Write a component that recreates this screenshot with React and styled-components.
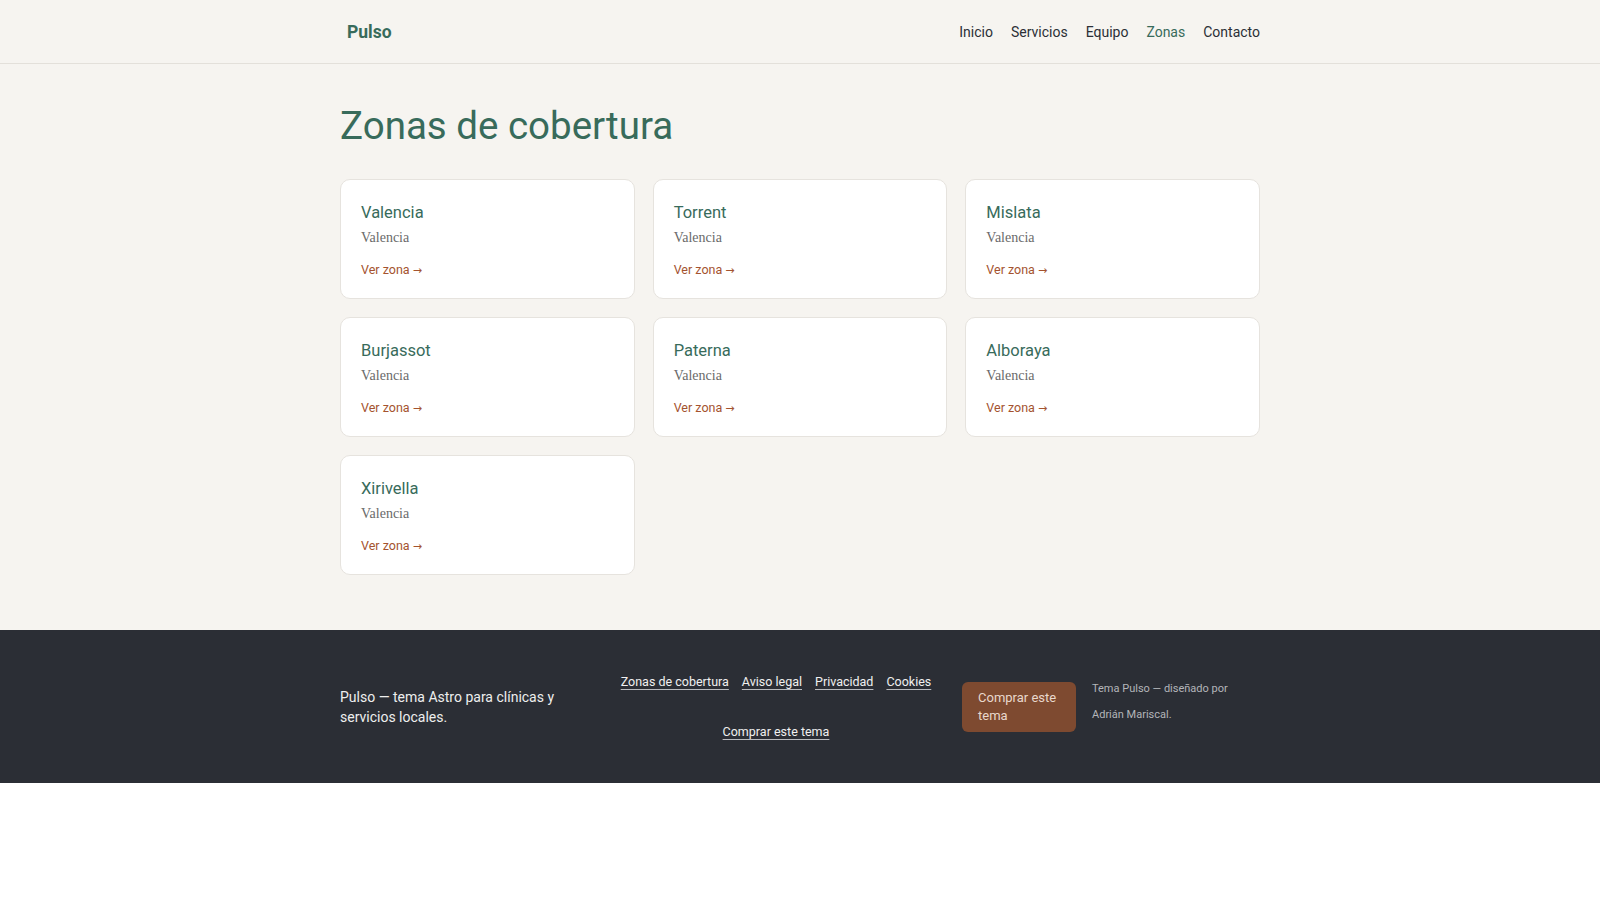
import React from "react";
import styled, { createGlobalStyle } from "styled-components";

const GlobalStyle = createGlobalStyle`
  * { box-sizing: border-box; }
  body {
    margin: 0;
    background: #ffffff;
    font-family: Roboto, "Liberation Sans", Arial, sans-serif;
    color: #2b2f36;
  }
  a { text-decoration: none; color: inherit; }
`;

const zonas = [
  "Valencia",
  "Torrent",
  "Mislata",
  "Burjassot",
  "Paterna",
  "Alboraya",
  "Xirivella",
];

const Page = styled.div`
  background: #f6f4f0;
`;

const Container = styled.div`
  width: 920px;
  margin: 0 auto;
`;

const Header = styled.header`
  height: 64px;
  border-bottom: 1px solid #e3e0da;
  ${Container} {
    height: 100%;
    display: flex;
    align-items: center;
    justify-content: space-between;
  }
`;

const Logo = styled.a`
  margin-left: 7px;
  font-size: 17.5px;
  font-weight: 700;
  color: #386b5b;
`;

const Nav = styled.nav`
  display: flex;
  gap: 18px;
`;

const NavLink = styled.a`
  font-size: 14px;
  color: ${(p) => (p.$active ? "#386b5b" : "#2b2f36")};
`;

const Main = styled.main`
  padding: 39px 0 55px;
`;

const Title = styled.h1`
  margin: 0 0 30px;
  font-size: 38.5px;
  line-height: 1.2;
  font-weight: 400;
  color: #386b5b;
`;

const Grid = styled.div`
  display: grid;
  grid-template-columns: repeat(3, 1fr);
  gap: 18px;
`;

const Card = styled.article`
  background: #ffffff;
  border: 1px solid #e6e3de;
  border-radius: 10px;
  padding: 21px 20px 20px;
  height: 120px;
`;

const CardTitle = styled.h2`
  margin: 0;
  font-size: 16.5px;
  line-height: 23px;
  font-weight: 400;
  color: #386b5b;
`;

const CardRegion = styled.p`
  margin: 4px 0 0;
  font-family: "Liberation Serif", "DejaVu Serif", serif;
  font-size: 14px;
  line-height: 19px;
  color: #6a6a6a;
`;

const CardLink = styled.a`
  display: inline-block;
  margin-top: 14px;
  font-size: 12.5px;
  line-height: 18px;
  color: #a4532f;
`;

const Arrow = styled.span`
  font-family: "DejaVu Sans", sans-serif;
  font-size: 11px;
`;

const Footer = styled.footer`
  background: #2b2e35;
  padding: 42px 0 41px;
  ${Container} {
    display: flex;
    align-items: center;
    gap: 24px;
  }
`;

const FooterText = styled.p`
  width: 250px;
  flex-shrink: 0;
  margin: 0;
  font-size: 14px;
  line-height: 20px;
  color: #eeeeee;
`;

const FooterNav = styled.nav`
  width: 324px;
  flex-shrink: 0;
  display: flex;
  flex-wrap: wrap;
  justify-content: center;
  column-gap: 13px;
  row-gap: 30px;
`;

const FooterLink = styled.a`
  font-size: 12.5px;
  line-height: 20px;
  color: #f0f0f0;
  text-decoration: underline;
  text-decoration-color: #b9bbbf;
  text-underline-offset: 3px;
`;

const FooterAside = styled.div`
  flex: 1;
  display: flex;
  align-items: center;
  gap: 16px;
`;

const BuyButton = styled.a`
  width: 114px;
  flex-shrink: 0;
  padding: 7px 16px;
  border-radius: 6px;
  background: #7e4a30;
  color: #e9d8cc;
  font-size: 13px;
  line-height: 18px;
`;

const Credit = styled.p`
  flex: 1;
  margin: 0 0 10px;
  font-size: 11px;
  line-height: 26px;
  color: #b3b5b9;
`;

export default function App() {
  return (
    <>
      <GlobalStyle />
      <Page>
        <Header>
          <Container>
            <Logo href="#">Pulso</Logo>
            <Nav>
              <NavLink href="#">Inicio</NavLink>
              <NavLink href="#">Servicios</NavLink>
              <NavLink href="#">Equipo</NavLink>
              <NavLink href="#" $active>
                Zonas
              </NavLink>
              <NavLink href="#">Contacto</NavLink>
            </Nav>
          </Container>
        </Header>
        <Main>
          <Container>
            <Title>Zonas de cobertura</Title>
            <Grid>
              {zonas.map((z) => (
                <Card key={z}>
                  <CardTitle>{z}</CardTitle>
                  <CardRegion>Valencia</CardRegion>
                  <CardLink href="#">
                    Ver zona <Arrow>→</Arrow>
                  </CardLink>
                </Card>
              ))}
            </Grid>
          </Container>
        </Main>
      </Page>
      <Footer>
        <Container>
          <FooterText>
            Pulso — tema Astro para clínicas y servicios locales.
          </FooterText>
          <FooterNav>
            <FooterLink href="#">Zonas de cobertura</FooterLink>
            <FooterLink href="#">Aviso legal</FooterLink>
            <FooterLink href="#">Privacidad</FooterLink>
            <FooterLink href="#">Cookies</FooterLink>
            <FooterLink href="#">Comprar este tema</FooterLink>
          </FooterNav>
          <FooterAside>
            <BuyButton href="#">Comprar este tema</BuyButton>
            <Credit>Tema Pulso — diseñado por Adrián Mariscal.</Credit>
          </FooterAside>
        </Container>
      </Footer>
    </>
  );
}
